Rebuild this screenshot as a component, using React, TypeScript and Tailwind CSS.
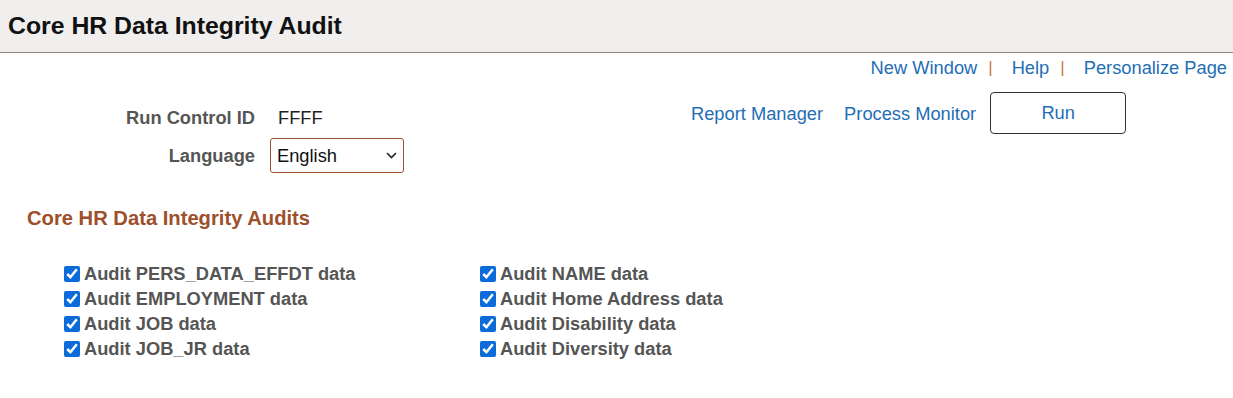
import React from 'react';

const leftAudits = [
  'Audit PERS_DATA_EFFDT data',
  'Audit EMPLOYMENT data',
  'Audit JOB data',
  'Audit JOB_JR data',
];

const rightAudits = [
  'Audit NAME data',
  'Audit Home Address data',
  'Audit Disability data',
  'Audit Diversity data',
];

const AuditCheck: React.FC<{ label: string }> = ({ label }) => (
  <label className="flex items-center h-[25px] gap-[4px] text-[18.3px] font-bold text-[#555555]">
    <input type="checkbox" defaultChecked className="w-4 h-4 m-0 accent-[#0b6cd9]" />
    <span>{label}</span>
  </label>
);

export default function App() {
  return (
    <div className="w-[1233px] h-[398px] bg-white" style={{ fontFamily: '"Liberation Sans", Arial, sans-serif' }}>
      {/* Header */}
      <div className="h-[53px] bg-[#f0efed] border-b border-[#8f8a85] flex items-center pl-[8px]">
        <h1 className="text-[24.8px] font-bold text-[#111111]">Core HR Data Integrity Audit</h1>
      </div>

      {/* Page links */}
      <div className="flex justify-end items-center h-[28px] pr-[6px] mt-[1px] text-[18.3px] text-[#1f6eb6]">
        <a className="cursor-pointer">New Window</a>
        <span className="text-[#c97a3a] ml-[11px] mr-[19px] text-[17px]">|</span>
        <a className="cursor-pointer">Help</a>
        <span className="text-[#c97a3a] ml-[11px] mr-[19px] text-[17px]">|</span>
        <a className="cursor-pointer">Personalize Page</a>
      </div>

      {/* Run control */}
      <div className="flex mt-[10px]">
        <div className="flex flex-col w-[404px] shrink-0">
          <div className="flex items-center h-[28px] mt-[12px]">
            <span className="w-[255px] text-right text-[18.3px] font-bold text-[#555555]">Run Control ID</span>
            <span className="ml-[23px] text-[18.3px] text-[#222222]">FFFF</span>
          </div>
          <div className="flex items-center mt-[6px]">
            <span className="w-[255px] text-right text-[18.3px] font-bold text-[#555555]">Language</span>
            <div className="relative ml-[15px]">
              <select className="appearance-none w-[134px] h-[35px] border border-[#9a5230] rounded-[3px] pl-[6px] text-[18.3px] text-[#111111] bg-white outline-none">
                <option>English</option>
              </select>
              <svg className="absolute right-[7px] top-[14px] pointer-events-none" width="11" height="7" viewBox="0 0 11 7">
                <path d="M1 1l4.5 4.5L10 1" fill="none" stroke="#222" strokeWidth="1.6" />
              </svg>
            </div>
          </div>
        </div>
        <div className="flex items-start ml-[287px] text-[18.3px] text-[#1f6eb6] whitespace-nowrap">
          <a className="mt-[8px] cursor-pointer">Report Manager</a>
          <a className="mt-[8px] ml-[21px] cursor-pointer">Process Monitor</a>
          <button className="ml-[14px] w-[136px] h-[42px] border border-[#333333] rounded-[4px] bg-white text-[18.3px] text-[#1f6eb6]">Run</button>
        </div>
      </div>

      {/* Audits */}
      <h2 className="mt-[30px] ml-[27px] text-[20.2px] font-bold text-[#9e4f2b]">Core HR Data Integrity Audits</h2>
      <div className="flex mt-[28px] ml-[64px]">
        <div className="flex flex-col w-[416px]">
          {leftAudits.map(a => <AuditCheck key={a} label={a} />)}
        </div>
        <div className="flex flex-col">
          {rightAudits.map(a => <AuditCheck key={a} label={a} />)}
        </div>
      </div>
    </div>
  );
}
